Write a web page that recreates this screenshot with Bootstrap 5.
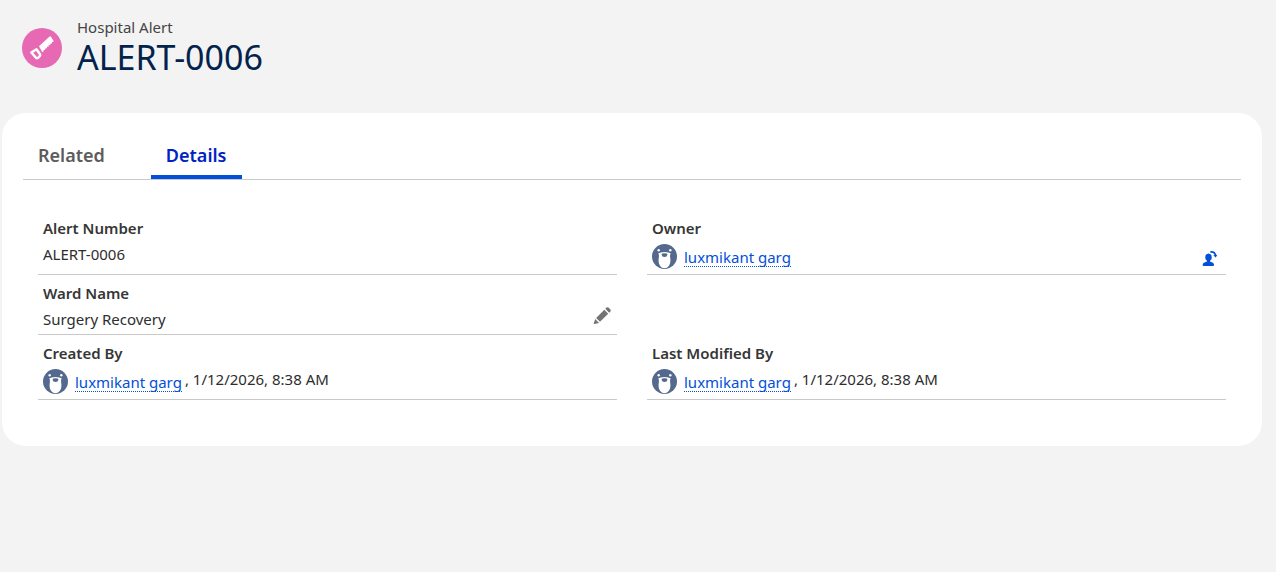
<!DOCTYPE html>
<html lang="en">
<head>
<meta charset="utf-8">
<meta name="viewport" content="width=device-width, initial-scale=1">
<title>ALERT-0006 | Hospital Alert</title>
<link href="https://cdn.jsdelivr.net/npm/bootstrap@5.3.0/dist/css/bootstrap.min.css" rel="stylesheet">
<style>
body { background: #f3f3f3; color: #2e2e2e; font-family: "Segoe UI", "Noto Sans", sans-serif; font-size: 15px; }
.record-head { padding: 17px 22px 0; gap: 15px; margin-bottom: 36px; }
.record-type { color: #444; line-height: 20px; }
.record-name { color: #03234d; font-size: 34px; line-height: 40px; font-weight: 400; }
.record-icon { width: 40px; height: 40px; margin-top: 11px; }
.record-card { background: #fff; border-radius: 24px; margin: 0 14px 0 2px; padding: 20px 21px 46px; }
.record-tabs { border-bottom: 1px solid #c9c9c9; gap: 30px; }
.record-tabs .nav-link { background: none; border: 0; color: #5c5c5c; font-size: 18px; line-height: 26px; font-weight: 600; padding: 9px 16px 7px 15px; border-bottom: 4px solid transparent; }
.record-tabs .nav-link.active { color: #0022c4; border-bottom-color: #0250d9; }
.field-list { padding: 30px 15px 0; column-gap: 30px; display: grid; grid-template-columns: 1fr 1fr; }
.field { border-bottom: 1px solid #c9c9c9; padding: 8px 5px 2px; }
.field-label { font-weight: 600; line-height: 20px; margin-bottom: 3px; color: #363636; }
.field-value { line-height: 26px; }
.user-value { padding: 0 0 3px; }
.avatar { width: 25px; height: 25px; margin: 3px 7px 0 0; }
.user-link { color: #0250d9; line-height: 18px; margin: 7px 3px 0 0; border-bottom: 1px dotted #0250d9; text-decoration: none; align-self: flex-start; }
.icon-button { background: none; border: 0; padding: 0; line-height: 1; }
</style>
</head>
<body>
<svg class="d-none" aria-hidden="true">
  <symbol id="bear" viewBox="0 0 25 25">
    <circle cx="12.500" cy="12.500" r="12.500" fill="#54698d"/>
    <circle cx="6.700" cy="6.200" r="1.200" fill="#fff"/><circle cx="18.300" cy="6.200" r="1.200" fill="#fff"/>
    <path d="M6.200 9.600Q8 7.900 12.500 7.900T18.800 9.600Q17.800 10.500 18.100 13C19.400 19.500 16.800 24.200 12.500 24.200S5.600 19.500 6.900 13Q7.200 10.500 6.200 9.600Z" fill="#fff"/>
    <path d="M9.500 10.500Q9.700 9.200 12.500 9.200t3 1.300q-.4 2.500-3 2.500t-3-2.500Z" fill="#54698d"/>
  </symbol>
</svg>

<header class="record-head d-flex">
  <svg class="record-icon flex-shrink-0" viewBox="0 0 40 40" aria-hidden="true">
    <circle cx="20" cy="20" r="20" fill="#e769b4"/>
    <path fill="#fff" d="M17 18.300 27.600 8.500q.8-.6 1.300.2l2.600 4.100q.4.900-.5 1.100l-1 .1v1.500l-1.700.1v1.500l-1.700.1v1.500l-1.700.1v1.500l-1.700.1-.1 1.500-1.400.1-.2 1.600-1.200.6Z"/>
    <path fill="none" stroke="#fff" stroke-width="2.400" stroke-linejoin="round" d="m9.300 24.400 5.200-3.200 3.500 5q.5 1.100-.3 1.900l-1.700 1.700q-1 .9-2 0Z"/>
  </svg>
  <div>
    <div class="record-type">Hospital Alert</div>
    <h1 class="record-name mb-0">ALERT-0006</h1>
  </div>
</header>

<main class="record-card">
  <ul class="nav record-tabs" role="tablist">
    <li class="nav-item" role="presentation"><button class="nav-link" id="related-tab" type="button" role="tab" aria-selected="false" data-bs-toggle="tab" data-bs-target="#related">Related</button></li>
    <li class="nav-item" role="presentation"><button class="nav-link active" id="details-tab" type="button" role="tab" aria-selected="true" data-bs-toggle="tab" data-bs-target="#details">Details</button></li>
  </ul>
  <div class="tab-content">
    <div class="tab-pane" id="related" role="tabpanel" aria-labelledby="related-tab"></div>
    <div class="tab-pane active" id="details" role="tabpanel" aria-labelledby="details-tab">
      <div class="field-list">
        <div class="field">
          <div class="field-label">Alert Number</div>
          <div class="field-value">ALERT-0006</div>
        </div>
        <div class="field">
          <div class="field-label">Owner</div>
          <div class="field-value user-value d-flex align-items-start">
            <svg class="avatar" aria-hidden="true"><use href="#bear"/></svg>
            <a class="user-link" href="#">luxmikant garg</a>
            <button class="icon-button ms-auto align-self-end" type="button" aria-label="Change Owner">
              <svg width="20" height="20" viewBox="4 0 20 20" fill="#0250d9" aria-hidden="true">
                <ellipse cx="11.500" cy="8.200" rx="3.200" ry="3.800"/>
                <path d="M10 10h3v2.500q4 1.200 4 3v.5q0 1-1 1H6.700q-1 0-1-1v-.5q0-1.800 4.300-3Z"/>
                <path d="M13.300 3q4.500-.6 5.200 3.500" fill="none" stroke="#0250d9" stroke-width="1.700"/>
                <path d="m16.300 6.200 4.100-.4-1.700 2.700Z"/>
              </svg>
            </button>
          </div>
        </div>
        <div class="field">
          <div class="field-label">Ward Name</div>
          <div class="field-value d-flex">
            <span>Surgery Recovery</span>
            <button class="icon-button ms-auto align-self-start" type="button" aria-label="Edit Ward Name">
              <svg width="20" height="20" viewBox="0 0 20 20" fill="#747474" aria-hidden="true">
                <path d="m12.300 3.800 3.900 3.900-8.200 8.100L4.100 12ZM13.300 2.800l1.200-1.200q1-.9 2 0l1.900 1.900q.9 1 0 2l-1.200 1.200ZM3.200 13l3.900 3.900-4.800 1.200q-.8.100-.6-.6Z"/>
              </svg>
            </button>
          </div>
        </div>
        <div></div>
        <div class="field">
          <div class="field-label">Created By</div>
          <div class="field-value user-value d-flex align-items-start">
            <svg class="avatar" aria-hidden="true"><use href="#bear"/></svg>
            <a class="user-link" href="#">luxmikant garg</a><span>, 1/12/2026, 8:38 AM</span>
          </div>
        </div>
        <div class="field">
          <div class="field-label">Last Modified By</div>
          <div class="field-value user-value d-flex align-items-start">
            <svg class="avatar" aria-hidden="true"><use href="#bear"/></svg>
            <a class="user-link" href="#">luxmikant garg</a><span>, 1/12/2026, 8:38 AM</span>
          </div>
        </div>
      </div>
    </div>
  </div>
</main>
<script src="https://cdn.jsdelivr.net/npm/bootstrap@5.3.0/dist/js/bootstrap.bundle.min.js"></script>
</body>
</html>
